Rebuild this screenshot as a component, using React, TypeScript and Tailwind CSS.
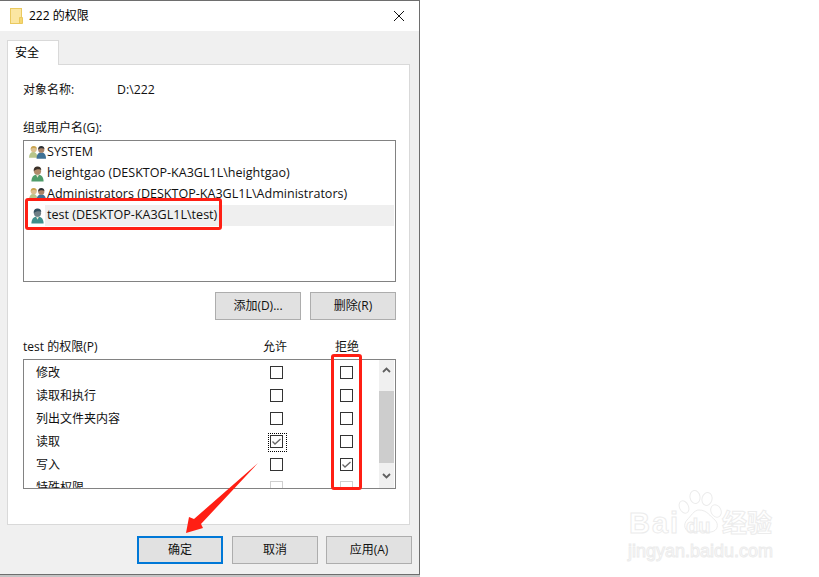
const fontStack = "font-['Open_Sans','Noto_Sans_CJK_SC',sans-serif]";

function SinglePerson({ teal }: { teal?: boolean }) {
  return (
    <svg width="15" height="18" viewBox="0 0 16 18" className="shrink-0">
      <path d="M1.500 17c0-5 2.500-7.500 6.500-7.500s6.500 2.500 6.500 7.500z" fill={teal ? "#3f8f8c" : "#4f9c6a"} />
      <path d="M6.500 10h3l-1.500 3z" fill="#e9e3cf" />
      <circle cx="8" cy="6" r="3.800" fill={teal ? "#6f7f86" : "#b08a6a"} />
      <path d="M4 6c-.4-3.500 1.800-5 4.200-5s4 1.700 3.800 4c-1.500-1.500-5.500-1.500-8 1z" fill={teal ? "#33505f" : "#3a3028"} />
    </svg>
  );
}

function GroupPerson() {
  return (
    <svg width="17" height="15" viewBox="0 0 18 15" className="shrink-0">
      <path d="M0 13c0-4 2-6 4.500-6s4.500 2 4.500 6z" fill="#b7c58a" />
      <circle cx="5" cy="4" r="3.200" fill="#dcc08e" />
      <path d="M1.800 4c0-2.500 1.500-3.500 3.200-3.500S8.200 1.500 8.200 3.500C6.500 2.500 3.500 2.500 1.800 4z" fill="#c9a44f" />
      <path d="M8 14c0-4.500 2-6.500 5-6.500s5 2 5 6.500z" fill="#3f7296" />
      <circle cx="13" cy="4.500" r="3.300" fill="#a88266" />
      <path d="M9.700 4.500c0-2.700 1.500-3.800 3.300-3.800s3.300 1.300 3.300 3c-1.700-1-4.600-1-6.600.8z" fill="#2c3036" />
    </svg>
  );
}

function FolderIcon() {
  return (
    <svg width="13" height="16" viewBox="0 0 13 16" className="shrink-0">
      <rect x="0.500" y="0.500" width="11" height="15" fill="#fbe6a2" stroke="#eac95f" />
      <path d="M9.500 9.500h3v6h-3z" fill="#f6d76f" stroke="#eac95f" />
    </svg>
  );
}

function WinButton({ label, focused }: { label: string; focused?: boolean }) {
  return (
    <button
      className={`w-[86px] h-[28px] bg-[#e1e1e1] text-[12px] text-[#111] flex items-center justify-center ${
        focused ? "border-2 border-[#0078d7]" : "border border-[#adadad]"
      }`}
    >
      {label}
    </button>
  );
}

function Check({ checked, disabled, focused }: { checked?: boolean; disabled?: boolean; focused?: boolean }) {
  return (
    <div className={`relative w-[13px] h-[13px] border bg-white ${disabled ? "border-[#cfcfcf]" : "border-[#333]"}`}>
      {checked && (
        <svg width="11" height="11" viewBox="0 0 11 11" className="absolute left-0 top-0">
          <path d="M1.500 5.500l2.500 2.500 5.500-5" fill="none" stroke="#666" strokeWidth="1.300" />
        </svg>
      )}
      {focused && <div className="absolute -left-[3px] -top-[3px] w-[19px] h-[19px] border border-dotted border-black" />}
    </div>
  );
}

const users = [
  { name: "SYSTEM", group: true },
  { name: "heightgao (DESKTOP-KA3GL1L\\heightgao)" },
  { name: "Administrators (DESKTOP-KA3GL1L\\Administrators)", group: true },
  { name: "test (DESKTOP-KA3GL1L\\test)", selected: true },
];

const perms = [
  { name: "修改" },
  { name: "读取和执行" },
  { name: "列出文件夹内容" },
  { name: "读取", allow: true, focused: true },
  { name: "写入", deny: true },
  { name: "特殊权限", disabled: true },
];

export default function App() {
  return (
    <div className={`relative w-[819px] h-[577px] bg-white overflow-hidden ${fontStack}`}>
      <div className="w-[420px] h-[575px] flex flex-col border-t border-r border-b border-t-[#6e6e6e] border-r-[#6e6e6e] border-b-[#6e6e6e] bg-[#f0f0f0]">
        {/* title bar */}
        <div className="h-[30px] bg-white flex items-center pl-[10px] pr-[14px] shrink-0">
          <FolderIcon />
          <span className="ml-[6px] text-[12px] text-black">222 的权限</span>
          <svg width="12" height="12" viewBox="0 0 12 12" className="ml-auto">
            <path d="M1 1l10 10M11 1L1 11" stroke="#111" strokeWidth="1" fill="none" />
          </svg>
        </div>

        {/* tab */}
        <div className="pl-[7px] pt-[9px] shrink-0">
          <div className="w-[52px] h-[25px] -mb-px relative z-10 bg-white border border-b-0 border-[#d9d9d9] pl-[7px] pt-[3px] text-[12px] text-black">
            安全
          </div>
        </div>

        {/* panel */}
        <div className="ml-[7px] w-[403px] h-[461px] bg-white border border-[#d9d9d9] px-[15px] shrink-0">
          <div className="flex mt-[16px] h-[18px] items-center text-[12px] text-[#111]">
            <span className="w-[94px]">对象名称:</span>
            <span className="text-[12.300px]">D:\222</span>
          </div>
          <div className="mt-[20px] h-[18px] flex items-center text-[12px] text-[#111]">组或用户名(G):</div>

          <div className="mt-[3px] w-[373px] h-[142px] border border-[#828282] pt-px pl-[5px] pr-px">
            {users.map((u) => (
              <div key={u.name} className="h-[21px] flex items-center">
                <div className="w-[16px] flex justify-start">{u.group ? <GroupPerson /> : <div className="pl-px"><SinglePerson teal={u.selected} /></div>}</div>
                <span className={`flex-1 h-full pl-[2px] flex items-center text-[12.550px] text-[#111] whitespace-nowrap ${u.selected ? "bg-[#efefef]" : ""}`}>
                  {u.name}
                </span>
              </div>
            ))}
          </div>

          <div className="mt-[10px] w-[373px] flex justify-end gap-[9px]">
            <WinButton label="添加(D)..." />
            <WinButton label="删除(R)" />
          </div>

          <div className="mt-[18px] h-[18px] flex items-center text-[12px] text-[#111] relative w-[373px]">
            <span>test 的权限(P)</span>
            <span className="ml-auto w-[36px] mr-[36px] text-center">允许</span>
            <span className="w-[36px] mr-[31px] text-center">拒绝</span>
          </div>

          <div className="mt-[3px] w-[373px] h-[130px] border border-[#828282] flex overflow-hidden">
            <div className="flex-1 pt-px">
              {perms.map((p) => (
                <div key={p.name} className="h-[23px] flex items-center pl-[12px] text-[12px] text-[#111]">
                  <span className="w-[234px]">{p.name}</span>
                  <Check checked={p.allow} disabled={p.disabled} focused={p.focused} />
                  <span className="w-[57px]" />
                  <Check checked={p.deny} disabled={p.disabled} />
                </div>
              ))}
            </div>
            <div className="w-[15px] mr-px bg-[#f0f0f0] flex flex-col items-center shrink-0">
              <div className="h-[31px] flex items-center justify-center pb-[11px]">
                <svg width="9" height="6" viewBox="0 0 9 6">
                  <path d="M1 5l3.500-3.500L8 5" fill="none" stroke="#606060" strokeWidth="1.800" />
                </svg>
              </div>
              <div className="w-full h-[72px] bg-[#cdcdcd]" />
              <div className="flex-1 flex items-center justify-center">
                <svg width="9" height="6" viewBox="0 0 9 6">
                  <path d="M1 1l3.500 3.500L8 1" fill="none" stroke="#606060" strokeWidth="1.800" />
                </svg>
              </div>
            </div>
          </div>
        </div>

        {/* footer buttons */}
        <div className="mt-[11px] ml-[137px] flex gap-[9px] w-fit">
          <WinButton label="确定" focused />
          <WinButton label="取消" />
          <div className="-ml-px"><WinButton label="应用(A)" /></div>
        </div>
      </div>
      <div className="w-[420px] h-[2px] bg-[#c4c4c4]" />

      {/* annotations over the screenshot */}
      <div className="absolute left-[25px] top-[198px] w-[197px] h-[32px] border-[3px] border-[#ff1f14] rounded-[3px]" />
      <div className="absolute left-[331px] top-[354px] w-[31px] h-[136px] border-[3px] border-[#ff1f14] rounded-[3px]" />
      <svg width="819" height="577" className="absolute left-0 top-0 pointer-events-none">
        <polygon points="258,463 201,524 203,528 186,533 189,517 194,519" fill="#ff1f14" />
      </svg>

      {/* watermark */}
      <div className="absolute left-[628px] top-[490px] w-[150px] h-[70px] text-transparent font-['Liberation_Sans','Noto_Sans_CJK_SC',sans-serif] [-webkit-text-stroke:1px_#ececec]">
        <span className="absolute left-[1px] top-[19px] text-[29px] leading-[28px] tracking-[2px] font-bold">Bai</span>
        <span className="absolute left-[58px] top-[27px] text-[20px] leading-[18px] font-bold">du</span>
        <span className="absolute left-[94px] top-[20px] text-[25px] leading-[26px] font-bold">经验</span>
        <span className="absolute left-0 top-[52px] text-[18px] leading-[18px]">jingyan.baidu.com</span>
        <svg width="50" height="46" viewBox="0 0 50 46" className="absolute left-[50px] top-0">
          <g fill="none" stroke="#ececec" strokeWidth="1">
            <ellipse cx="6" cy="17" rx="4.500" ry="6.500" transform="rotate(-25 6 17)" />
            <ellipse cx="17" cy="7" rx="5" ry="6.500" transform="rotate(-10 17 7)" />
            <ellipse cx="29" cy="9" rx="5" ry="6.500" transform="rotate(15 29 9)" />
            <ellipse cx="38" cy="21" rx="5" ry="6.500" transform="rotate(-25 38 21)" />
            <path d="M21 20c-5 0-8 6-12 10-4 4-3 12 5 12 4 0 6-1 9-1s6 2 10 1c7-1 8-8 4-12-5-4-8-10-16-10z" />
          </g>
        </svg>
      </div>
    </div>
  );
}
